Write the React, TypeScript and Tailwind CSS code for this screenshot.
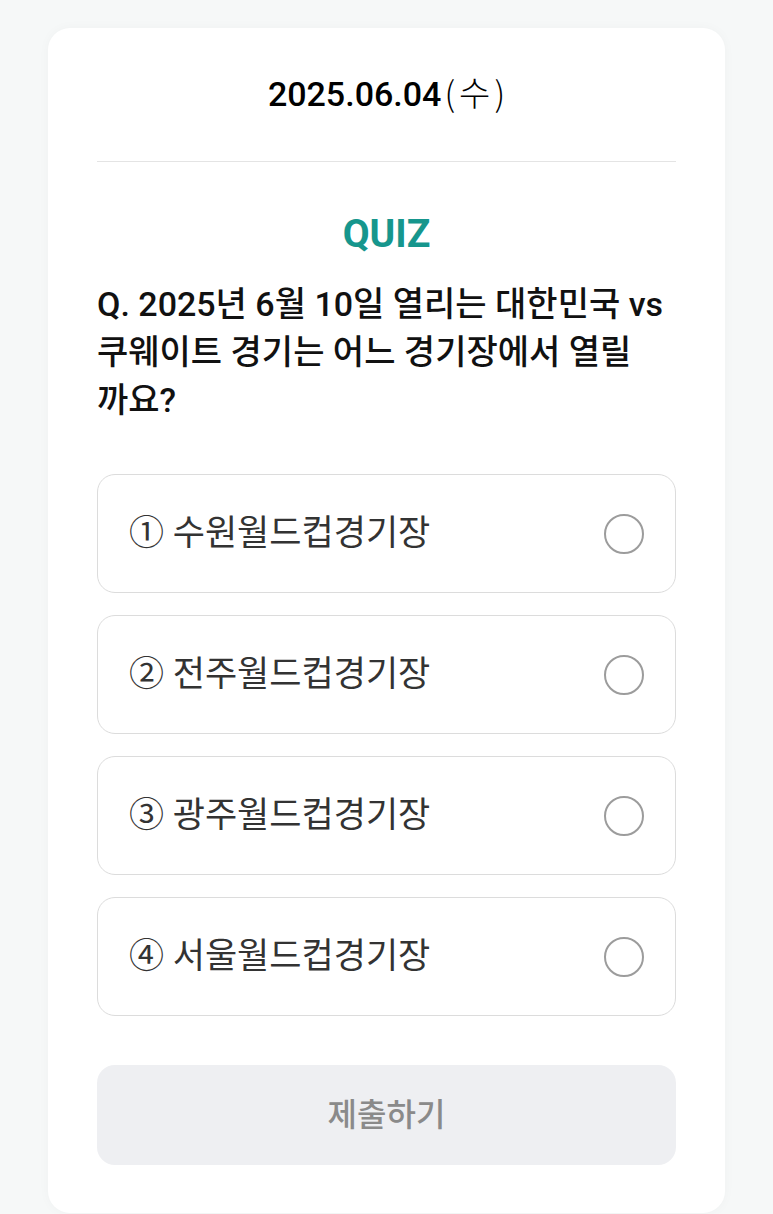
import React from 'react';

const options = ['① 수원월드컵경기장', '② 전주월드컵경기장', '③ 광주월드컵경기장', '④ 서울월드컵경기장'];

const App: React.FC = () => {
  return (
    <div
      className="min-h-screen bg-[#f6f8f8] pt-[28px] px-[48px] pb-px"
      style={{ fontFamily: 'Roboto, "Noto Sans CJK KR", sans-serif' }}
    >
      <div className="bg-white rounded-[22px] shadow-[0_0_12px_rgba(0,0,0,0.03)] px-[49px] pt-[44px] pb-[48px]">
        {/* Date */}
        <div className="text-center text-[34px] leading-[40px] text-black">
          <span className="font-medium">2025.06.04</span>
          <span className="font-light ml-[3px] -mr-[4px] tracking-[4px] font-['Noto_Sans_CJK_KR',sans-serif]">(수)</span>
        </div>

        <div className="mt-[47px] h-px bg-[#e4e4e4]" />

        {/* Quiz header */}
        <div className="mt-[50px] text-center text-[39px] leading-[44px] font-bold text-[#16968d]">
          QUIZ
        </div>

        <p className="mt-[24px] text-[34px] leading-[48px] font-medium text-[#111] whitespace-nowrap">
          Q. 2025년 6월 10일 열리는 대한민국 vs
          <br />
          쿠웨이트 경기는 어느 경기장에서 열릴
          <br />
          까요?
        </p>

        <div className="mt-[50px] flex flex-col gap-[22px]">
          {options.map((opt) => (
            <div
              key={opt}
              className="h-[119px] flex items-center justify-between rounded-[18px] border border-[#dcdcdc] pl-[31px] pr-[31px]"
            >
              <span className="text-[35px] leading-[40px] text-[#333]">{opt}</span>
              <span className="w-[40px] h-[40px] rounded-full border-2 border-[#9c9c9c]" />
            </div>
          ))}
        </div>

        <button className="mt-[49px] w-full h-[100px] rounded-[18px] bg-[#eeeff2] text-[32px] font-medium text-[#8a8a8a]">
          제출하기
        </button>
      </div>
    </div>
  );
};

export default App;
